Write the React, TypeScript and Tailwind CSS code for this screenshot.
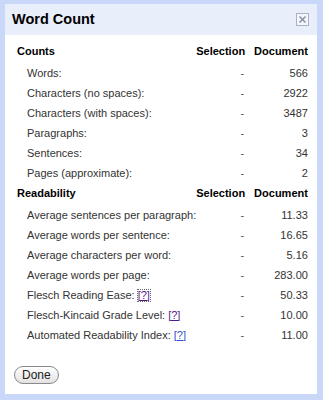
import React from 'react';

type Row = { label: string; doc: string; help?: 'visited' | 'focus' | 'link' };

const counts: Row[] = [
  { label: 'Words:', doc: '566' },
  { label: 'Characters (no spaces):', doc: '2922' },
  { label: 'Characters (with spaces):', doc: '3487' },
  { label: 'Paragraphs:', doc: '3' },
  { label: 'Sentences:', doc: '34' },
  { label: 'Pages (approximate):', doc: '2' },
];

const readability: Row[] = [
  { label: 'Average sentences per paragraph:', doc: '11.33' },
  { label: 'Average words per sentence:', doc: '16.65' },
  { label: 'Average characters per word:', doc: '5.16' },
  { label: 'Average words per page:', doc: '283.00' },
  { label: 'Flesch Reading Ease:', doc: '50.33', help: 'focus' },
  { label: 'Flesch-Kincaid Grade Level:', doc: '10.00', help: 'visited' },
  { label: 'Automated Readability Index:', doc: '11.00', help: 'link' },
];

const Section = ({ title, rows }: { title: string; rows: Row[] }) => (
  <>
    <div className="flex h-5 items-center pl-3 font-bold text-black">{title}</div>
    <div className="flex h-5 items-center justify-end font-bold text-black">Selection</div>
    <div className="flex h-5 items-center justify-end pl-[9px] font-bold text-black">Document</div>
    <div className="col-span-3 h-[2px]" />
    {rows.map((r) => (
      <React.Fragment key={r.label}>
        <div className="flex h-5 items-center whitespace-nowrap pl-[22px] text-[#333]">
          {r.label}
          {r.help && (
            <a
              href="#"
              className={
                'ml-[3px] underline ' +
                (r.help === 'link' ? 'text-[#3355cc]' : 'text-[#551a8b]') +
                (r.help === 'focus' ? ' outline outline-1 outline-dotted outline-[#667]' : '')
              }
            >
              [?]
            </a>
          )}
        </div>
        <div className="flex h-5 items-center justify-end pr-[1px] text-[#555]">-</div>
        <div className="flex h-5 items-center justify-end text-[#333]">{r.doc}</div>
      </React.Fragment>
    ))}
  </>
);

export default function App() {
  return (
    <div className="h-[400px] w-[323px] bg-[#c9d8f8] pb-[6px] pl-[5px] pr-[6px] pt-[4px] font-['Liberation_Sans',Arial,sans-serif]">
      <div className="flex h-full flex-col bg-white">
        {/* header */}
        <div className="flex h-[31px] items-center justify-between bg-[#e8eefa] pl-[7px] pr-[8px]">
          <span className="text-[14.5px] font-bold text-black">Word Count</span>
          <button className="flex h-[13px] w-[13px] items-center justify-center border border-[#a9b3c4] bg-[#f4f6fb]">
            <svg width="9" height="9" viewBox="0 0 9 9">
              <path d="M1.5 1.5 L7.5 7.5 M7.5 1.5 L1.5 7.5" stroke="#8a94a8" strokeWidth="1.6" />
            </svg>
          </button>
        </div>

        <div className="grid grid-cols-[1fr_auto_auto] pr-[10px] pt-[6px] text-[11px] leading-none">
          <Section title="Counts" rows={counts} />
          <Section title="Readability" rows={readability} />
        </div>

        <div className="mt-auto pb-[8px] pl-[9px]">
          <button className="h-[18px] rounded-full border border-[#8a8a8a] bg-gradient-to-b from-white to-[#e2e2e2] px-[7px] text-[12px] leading-none text-[#222] shadow-[inset_0_1px_0_#fff]">
            Done
          </button>
        </div>
      </div>
    </div>
  );
}
